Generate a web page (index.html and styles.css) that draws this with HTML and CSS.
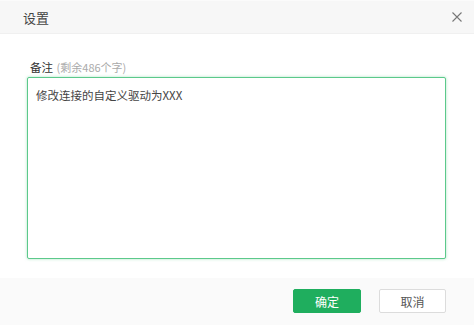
FILE: index.html
```html
<!DOCTYPE html>
<html lang="zh-CN">
<head>
<meta charset="utf-8">
<title>设置</title>
<link rel="stylesheet" href="styles.css">
</head>
<body>
<div class="dialog">
  <div class="header">
    <span class="title">设置</span>
    <svg class="close" width="10" height="10" viewBox="0 0 10 10"><path d="M0.5 0.5L9.5 9.5M9.5 0.5L0.5 9.5" stroke="#777" stroke-width="1.1" fill="none"/></svg>
  </div>
  <div class="content">
    <div class="label">备注 <span class="hint">(剩余486个字)</span></div>
    <textarea class="note">修改连接的自定义驱动为XXX</textarea>
  </div>
  <div class="footer">
    <button class="btn btn-primary">确定</button>
    <button class="btn btn-default">取消</button>
  </div>
</div>
</body>
</html>
```
FILE: styles.css
```css
html, body {
  margin: 0;
  padding: 0;
  background: #fff;
}
.dialog {
  width: 474px;
  height: 325px;
  display: flex;
  flex-direction: column;
  font-family: "Noto Sans CJK SC", "Noto Sans", sans-serif;
  color: #333;
}
.header {
  height: 34px;
  box-sizing: border-box;
  background: #f7f7f7;
  border-top: 1px solid #fbfbfb;
  border-bottom: 1px solid #f0f0f0;
  display: flex;
  align-items: center;
  justify-content: space-between;
  padding: 0 12px 0 23px;
}
.title {
  font-size: 13px;
  color: #444;
}
.close {
  display: block;
}
.content {
  flex: 1;
  padding: 25px 28px 0 27px;
}
.label {
  height: 18px;
  line-height: 17px;
  font-size: 11.5px;
  color: #333;
  padding-left: 3px;
}
.hint {
  font-size: 11px;
  color: #aaa;
  margin-left: 1px;
}
.note {
  display: block;
  width: 419px;
  height: 182px;
  box-sizing: border-box;
  margin: 0;
  border: 1px solid #5cc98b;
  border-radius: 2px;
  box-shadow: 0 0 3px rgba(92, 201, 139, 0.55);
  padding: 8px 8px;
  font-family: "Noto Sans CJK SC", "Noto Sans", sans-serif;
  font-size: 11.5px;
  line-height: 18px;
  color: #444;
  resize: none;
  outline: none;
  background: #fff;
}
.footer {
  height: 47px;
  box-sizing: border-box;
  background: #fafafa;
  display: flex;
  justify-content: flex-end;
  align-items: flex-start;
  gap: 18px;
  padding: 11px 28px 0 0;
}
.btn {
  height: 24px;
  box-sizing: border-box;
  border-radius: 2px;
  font-family: "Noto Sans CJK SC", "Noto Sans", sans-serif;
  font-size: 12px;
  padding: 0;
  cursor: pointer;
}
.btn-primary {
  width: 68px;
  background: #1fae5e;
  border: 1px solid #1fae5e;
  color: #fff;
}
.btn-default {
  width: 67px;
  background: #fff;
  border: 1px solid #dcdcdc;
  color: #555;
}
```
